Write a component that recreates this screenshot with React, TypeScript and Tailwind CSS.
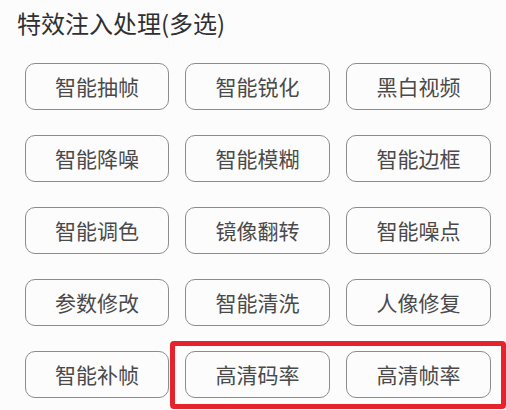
const options = [
  '智能抽帧',
  '智能锐化',
  '黑白视频',
  '智能降噪',
  '智能模糊',
  '智能边框',
  '智能调色',
  '镜像翻转',
  '智能噪点',
  '参数修改',
  '智能清洗',
  '人像修复',
  '智能补帧',
  '高清码率',
  '高清帧率',
]

function OptionButton({ label }: { label: string }) {
  return (
    <div className="flex h-[47px] items-center justify-center rounded-[10px] border-[1.5px] border-[#8c8c8c] text-[21px] leading-none text-[#4a4a4a]">
      {label}
    </div>
  )
}

export default function App() {
  return (
    <div
      className="relative h-[410px] w-[506px] overflow-hidden bg-[#fdfcfd]"
      style={{ fontFamily: '"Noto Sans CJK SC", "Noto Sans", sans-serif' }}
    >
      <h1 className="pl-[17px] pt-[11px] text-[24px] leading-none text-[#303030]">
        特效注入处理(多选)
      </h1>

      <div className="mt-[28px] grid grid-cols-[144px_145px_145px] gap-x-4 gap-y-[25px] pl-[25px]">
        {options.map((o) => (
          <OptionButton key={o} label={o} />
        ))}
      </div>

      {/* annotation box over the last two options */}
      <div className="absolute left-[170px] top-[341px] h-[68px] w-[336px] rounded-[4px] border-[5px] border-[#e6222a]" />
    </div>
  )
}
